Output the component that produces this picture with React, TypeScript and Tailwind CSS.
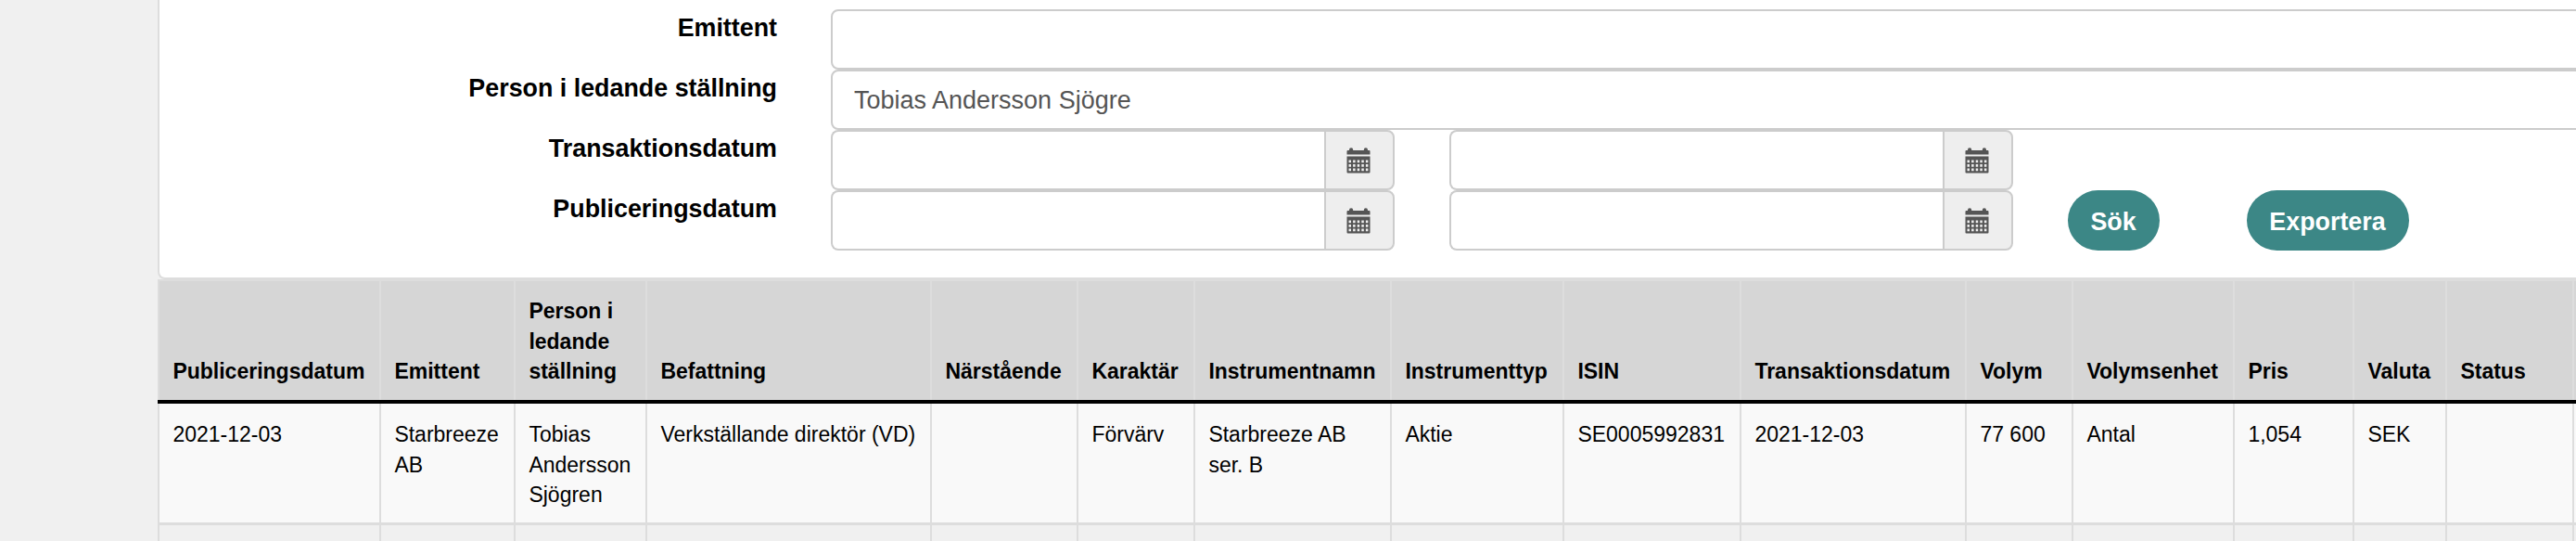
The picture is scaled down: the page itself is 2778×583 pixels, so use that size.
import React from 'react'

const columns = [
  { title: 'Publiceringsdatum', value: '2021-12-03', width: 239 },
  { title: 'Emittent', value: 'Starbreeze AB', width: 145 },
  { title: 'Person i ledande ställning', value: 'Tobias Andersson Sjögren', width: 142 },
  { title: 'Befattning', value: 'Verkställande direktör (VD)', width: 307 },
  { title: 'Närstående', value: '', width: 158 },
  { title: 'Karaktär', value: 'Förvärv', width: 126 },
  { title: 'Instrumentnamn', value: 'Starbreeze AB ser. B', width: 212 },
  { title: 'Instrumenttyp', value: 'Aktie', width: 186 },
  { title: 'ISIN', value: 'SE0005992831', width: 191 },
  { title: 'Transaktionsdatum', value: '2021-12-03', width: 243 },
  { title: 'Volym', value: '77 600', width: 115 },
  { title: 'Volymsenhet', value: 'Antal', width: 174 },
  { title: 'Pris', value: '1,054', width: 129 },
  { title: 'Valuta', value: 'SEK', width: 100 },
  { title: 'Status', value: '', width: 137 },
  { title: '', value: '', width: 200 },
]

const tableWidth = columns.reduce((sum, col) => sum + col.width, 0)

function CalendarIcon() {
  return (
    <svg className="h-[28px] w-[26px]" viewBox="0 0 26 28" fill="#555">
      <path d="M.5 4a1 1 0 0 1 1-1H3V2.4a2.1 2.1 0 0 1 4.2 0V3h11.6v-.6a2.1 2.1 0 0 1 4.2 0V3h1.5a1 1 0 0 1 1 1v3.5H.5z" />
      <path
        fillRule="evenodd"
        d="M.5 9.5h25v17a1 1 0 0 1-1 1h-23a1 1 0 0 1-1-1zM2.5 13.5v2.7h2.5v-2.7zM7.1 13.5v2.7h2.5v-2.7zM11.7 13.5v2.7h2.5v-2.7zM16.3 13.5v2.7h2.5v-2.7zM20.9 13.5v2.7h2.5v-2.7zM2.5 18v2.7h2.5v-2.7zM7.1 18v2.7h2.5v-2.7zM11.7 18v2.7h2.5v-2.7zM16.3 18v2.7h2.5v-2.7zM20.9 18v2.7h2.5v-2.7zM2.5 22.5v2.7h2.5v-2.7zM7.1 22.5v2.7h2.5v-2.7zM11.7 22.5v2.7h2.5v-2.7zM16.3 22.5v2.7h2.5v-2.7zM20.9 22.5v2.7h2.5v-2.7z"
      />
    </svg>
  )
}

function DateField({ name }: { name: string }) {
  return (
    <div className="flex h-full w-[608px] shrink-0">
      <input
        aria-label={name}
        className="h-full w-[532px] rounded-l-lg border-2 border-r-0 border-[#ccc] bg-white px-6"
      />
      <button
        aria-label="Välj datum"
        className="flex h-full w-[76px] items-center justify-center rounded-r-lg border-2 border-[#ccc] bg-[#eee] pr-0.5 pt-px"
      >
        <CalendarIcon />
      </button>
    </div>
  )
}

function FormRow({ label, children }: { label: string; children: React.ReactNode }) {
  return (
    <div className="flex h-[65px]">
      <div className="w-[666px] shrink-0 pt-[4px] text-right font-bold leading-[32px]">{label}</div>
      <div className="ml-[58px] flex h-full">{children}</div>
    </div>
  )
}

export default function App() {
  return (
    <div className="h-[583px] w-[2778px] overflow-hidden bg-[#f0f0f0] pl-[170px] font-['Liberation_Sans',Arial,sans-serif] text-[26.85px] text-black">
      <div className="h-[301px] w-[2640px] rounded-bl-lg border-b-2 border-l-2 border-[#ddd] bg-white pt-[10px]">
        <FormRow label="Emittent">
          <input
            aria-label="Emittent"
            className="h-full w-[1900px] rounded-lg border-2 border-[#ccc] bg-white px-6"
          />
        </FormRow>
        <FormRow label="Person i ledande ställning">
          <input
            aria-label="Person i ledande ställning"
            defaultValue="Tobias Andersson Sjögre"
            className="h-full w-[1900px] rounded-lg border-2 border-[#ccc] bg-white px-[23px] pt-px text-[27px] text-[#555]"
          />
        </FormRow>
        <FormRow label="Transaktionsdatum">
          <div className="flex gap-[59px]">
            <DateField name="Transaktionsdatum från" />
            <DateField name="Transaktionsdatum till" />
          </div>
        </FormRow>
        <FormRow label="Publiceringsdatum">
          <div className="flex gap-[59px]">
            <DateField name="Publiceringsdatum från" />
            <DateField name="Publiceringsdatum till" />
            <div className="flex gap-[94px]">
              <button className="h-full w-[99px] rounded-full bg-[#3c8786] pr-px pt-[4px] text-center font-bold text-white">
                Sök
              </button>
              <button className="h-full w-[175px] rounded-full bg-[#3c8786] pr-px pt-[4px] text-center font-bold text-white">
                Exportera
              </button>
            </div>
          </div>
        </FormRow>
      </div>

      <table
        className="table-fixed border-separate border-spacing-0 text-left text-[23px] leading-[32.67px]"
        style={{ width: tableWidth }}
      >
        <colgroup>
          {columns.map((col, i) => (
            <col key={i} style={{ width: col.width }} />
          ))}
        </colgroup>
        <thead>
          <tr className="h-[130px] bg-[#d6d6d6]">
            {columns.map((col, i) => (
              <th
                key={i}
                className="border-l-2 border-t-2 border-[#ddd] pb-[14px] pl-[14.4px] pr-2 align-bottom font-bold"
              >
                {col.title}
              </th>
            ))}
          </tr>
          {/* unbroken rule under the headings */}
          <tr className="h-1 bg-black">
            <td colSpan={columns.length} className="p-0" />
          </tr>
        </thead>
        <tbody>
          <tr className="h-[131px] bg-[#f9f9f9]">
            {columns.map((col, i) => (
              <td key={i} className="border-b-3 border-l-2 border-[#ddd] pl-[14.4px] pr-2 pt-[17px] align-top">
                {col.value}
              </td>
            ))}
          </tr>
          <tr className="h-[131px]">
            {columns.map((col, i) => (
              <td key={i} className="border-l-2 border-[#ddd]" />
            ))}
          </tr>
        </tbody>
      </table>
    </div>
  )
}
